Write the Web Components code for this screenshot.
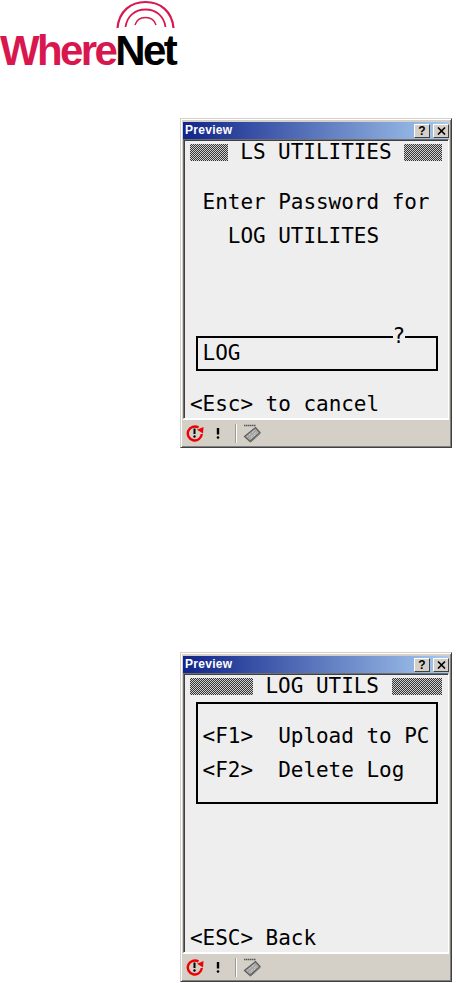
<!DOCTYPE html>
<html>
<head>
<meta charset="utf-8">
<style>
  html, body { margin: 0; background: #fff; }
  body { width: 456px; height: 983px; overflow: hidden; }
</style>
</head>
<body>
<where-logo></where-logo>

<ce-window style="margin-top: 44px">
  <lcd-banner left="3" right="3">LS UTILITIES</lcd-banner>
  <lcd-line row="3" col="1">Enter Password for</lcd-line>
  <lcd-line row="5" col="3">LOG UTILITES</lcd-line>
  <lcd-box row="11.5" rows="2" prompt>
    <lcd-text>LOG</lcd-text>
  </lcd-box>
  <lcd-line row="15">&lt;Esc&gt; to cancel</lcd-line>
</ce-window>

<ce-window style="margin-top: 204px">
  <lcd-banner left="5" right="4">LOG UTILS</lcd-banner>
  <lcd-box row="1.5" rows="6" inset="1.5">
    <lcd-text>&lt;F1&gt;  Upload to PC</lcd-text>
    <lcd-text>&lt;F2&gt;  Delete Log</lcd-text>
  </lcd-box>
  <lcd-line row="15">&lt;ESC&gt; Back</lcd-line>
</ce-window>

<script>
// tamaño de celda de la pantalla del terminal
const CELL_W = 12.6;
const CELL_H = 16.8;

// white-space va en el slot: en el host haría visibles los saltos de línea del shadow
const LCD_FONT = `
  font-family: "DejaVu Sans Mono", "Liberation Mono", monospace;
  font-size: 21px;
  line-height: ${CELL_H}px;
  letter-spacing: -0.04px;
  color: #000;
`;

class WhereLogo extends HTMLElement {
  constructor() {
    super();
    this.attachShadow({ mode: 'open' });
    this.shadowRoot.innerHTML = `
      <style>
        :host { display: block; width: 180px; height: 74px; }
        svg { display: block; }
        .name {
          font: bold 42px/32px "Liberation Sans", Arial, sans-serif;
          letter-spacing: -2.6px;
          color: #d8174f;
          white-space: nowrap;
          margin-top: 1px;
        }
        .name b { color: #000; }
      </style>
      <svg width="180" height="34" viewBox="0 0 180 34" fill="none" stroke="#d8174f">
        <path d="M117.5 28C119 11 131 2 145.500 2S172 11 173.500 28" stroke-width="2.200"/>
        <path d="M125.500 27C127 16 135 9.500 145.500 9.500S164 16 165.500 27" stroke-width="1.800"/>
        <path d="M135 25C136.500 20 140 17.500 145.500 17.500S154.500 20 156 25" stroke-width="1.400"/>
      </svg>
      <div class="name">Where<b>Net</b></div>
    `;
  }
}

class CeWindow extends HTMLElement {
  constructor() {
    super();
    this.attachShadow({ mode: 'open' });
    this.shadowRoot.innerHTML = `
      <style>
        :host {
          display: block;
          width: 272px;
          height: 330px;
          margin-left: 180px;
          box-sizing: border-box;
          background: #d4d0c8;
          border-top: 1px solid #d4d0c8;
          border-left: 1px solid #d4d0c8;
          border-right: 1px solid #404040;
          border-bottom: 1px solid #404040;
          padding: 3px 2px 1px;
          display: flex;
          flex-direction: column;
          box-shadow: inset 1px 1px 0 #fff, inset -1px -1px 0 #808080;
        }
        .screen {
          flex: 1;
          min-height: 0;
          border: 1px solid;
          border-color: #6e6e6e #fff #fff #6e6e6e;
          box-shadow: inset 1px 1px 0 #404040;
          background: #eeeeee;
          padding: 4px 0 0 6px;
          display: grid;
          grid-template-columns: repeat(20, ${CELL_W}px);
          grid-template-rows: repeat(32, ${CELL_H / 2}px);
        }
      </style>
      <ce-titlebar>Preview</ce-titlebar>
      <div class="screen"><slot></slot></div>
      <ce-toolbar></ce-toolbar>
    `;
  }
}

class CeTitlebar extends HTMLElement {
  constructor() {
    super();
    this.attachShadow({ mode: 'open' });
    this.shadowRoot.innerHTML = `
      <style>
        :host {
          display: flex;
          flex: none;
          align-items: center;
          height: 17px;
          padding: 0 0 0 2px;
          gap: 3px;
          background: linear-gradient(90deg, #10248a, #a6caf0);
          color: #fff;
          font: bold 12px/17px "Liberation Sans", Arial, sans-serif;
        }
        .title { flex: 1; letter-spacing: .3px; }
        .btn {
          width: 16px;
          height: 14px;
          box-sizing: border-box;
          display: flex;
          align-items: center;
          justify-content: center;
          background: #d4d0c8;
          border: 1px solid;
          border-color: #fff #404040 #404040 #fff;
          color: #000;
          font: bold 12px/12px "Liberation Sans", Arial, sans-serif;
        }
      </style>
      <span class="title"><slot></slot></span>
      <span class="btn">?</span>
      <span class="btn">
        <svg width="9" height="8" viewBox="0 0 9 8" stroke="#000" stroke-width="1.600">
          <path d="M1 0.500L8 7.500M8 0.500L1 7.500"/>
        </svg>
      </span>
    `;
  }
}

class CeToolbar extends HTMLElement {
  constructor() {
    super();
    this.attachShadow({ mode: 'open' });
    this.shadowRoot.innerHTML = `
      <style>
        :host {
          display: flex;
          flex: none;
          align-items: center;
          height: 26px;
          padding: 0 0 0 3px;
          background: #d4d0c8;
          border-top: 1px solid #fff;
        }
        svg { display: block; flex: none; }
        .sep {
          width: 1px;
          height: 19px;
          margin: 0 7px 0 8px;
          background: #9a9a94;
          box-shadow: 1px 0 0 #fff;
        }
      </style>
      <svg width="18" height="18" viewBox="0 0 18 18" fill="none">
        <path d="M12.500 3.500A7 7 0 1 0 15.800 10" stroke="#f00000" stroke-width="2.400"/>
        <path d="M17.500 3L17 9.500 11 5.800Z" fill="#f00000"/>
        <path d="M8.500 4.500V10" stroke="#000" stroke-width="2"/>
        <circle cx="8.500" cy="12.500" r="1.200" fill="#000"/>
      </svg>
      <svg width="18" height="18" viewBox="0 0 18 18" style="margin-left:5px" fill="none">
        <path d="M9 4V10.500" stroke="#000" stroke-width="2.400"/>
        <circle cx="9" cy="13.500" r="1.300" fill="#000"/>
      </svg>
      <span class="sep"></span>
      <svg width="18" height="20" viewBox="0 0 18 20" fill="none">
        <path d="M1 2.500H13" stroke="#555" stroke-width="1.400" stroke-dasharray="1.500 .5"/>
        <path d="M1.500 13.500L12.500 4.500 17 9.500 7 18.500Z" fill="#a2a2a0" stroke="#5c5c5c" stroke-width="1.200"/>
        <path d="M4.500 13.500L12 7M6.500 15L13.500 8.800M8 15.500L14.500 10" stroke="#e8e8e8" stroke-width="1" stroke-dasharray="1 1"/>
        <path d="M7.500 19.300L17.500 10.300" stroke="#777" stroke-width="1"/>
      </svg>
    `;
  }
}

class LcdBanner extends HTMLElement {
  constructor() {
    super();
    this.attachShadow({ mode: 'open' });
    const left = this.getAttribute('left');
    const right = this.getAttribute('right');
    this.shadowRoot.innerHTML = `
      <style>
        :host {
          ${LCD_FONT}
          display: flex;
          grid-column: 1 / -1;
          grid-row: 1 / span 2;
          gap: ${CELL_W}px;
          align-items: stretch;
        }
        slot { white-space: pre; }
        .hatch {
          background: repeating-conic-gradient(#333 0 25%, #d0d0d0 0 50%) 0 0 / 2px 2px;
        }
      </style>
      <span class="hatch" style="width:${left * CELL_W}px"></span>
      <slot></slot>
      <span class="hatch" style="width:${right * CELL_W}px"></span>
    `;
  }
}

class LcdLine extends HTMLElement {
  constructor() {
    super();
    this.attachShadow({ mode: 'open' });
    const row = Number(this.getAttribute('row'));
    const col = Number(this.getAttribute('col') || 0);
    this.shadowRoot.innerHTML = `
      <style>
        :host {
          ${LCD_FONT}
          display: block;
          grid-row: ${row * 2 + 1} / span 2;
          grid-column: ${col + 1} / -1;
        }
        slot { white-space: pre; }
      </style>
      <slot></slot>
    `;
  }
}

class LcdText extends HTMLElement {
  constructor() {
    super();
    this.attachShadow({ mode: 'open' });
    this.shadowRoot.innerHTML = `
      <style>
        :host { ${LCD_FONT} display: block; }
        slot { white-space: pre; }
      </style>
      <slot></slot>
    `;
  }
}

class LcdBox extends HTMLElement {
  constructor() {
    super();
    this.attachShadow({ mode: 'open' });
    const row = Number(this.getAttribute('row'));
    const rows = Number(this.getAttribute('rows'));
    const inset = Number(this.getAttribute('inset') || 0.5);
    const prompt = this.hasAttribute('prompt')
      ? `<span class="prompt">?</span>` : '';
    this.shadowRoot.innerHTML = `
      <style>
        :host {
          display: flex;
          flex-direction: column;
          gap: ${CELL_H}px;
          position: relative;
          box-sizing: border-box;
          grid-row: ${row * 2 + 1} / span ${rows * 2};
          grid-column: 1 / -1;
          margin: -1px 4px 0 6px;
          border: 2px solid #000;
          padding: ${inset * CELL_H - 1}px 0 0 ${CELL_W - 8}px;
        }
        .prompt {
          ${LCD_FONT}
          position: absolute;
          top: -10px;
          left: ${CELL_W * 16 - 7}px;
          width: ${CELL_W}px;
          background: #eeeeee;
        }
      </style>
      <slot></slot>
      ${prompt}
    `;
  }
}

customElements.define('where-logo', WhereLogo);
customElements.define('ce-titlebar', CeTitlebar);
customElements.define('ce-toolbar', CeToolbar);
customElements.define('ce-window', CeWindow);
customElements.define('lcd-banner', LcdBanner);
customElements.define('lcd-line', LcdLine);
customElements.define('lcd-text', LcdText);
customElements.define('lcd-box', LcdBox);
</script>
</body>
</html>
